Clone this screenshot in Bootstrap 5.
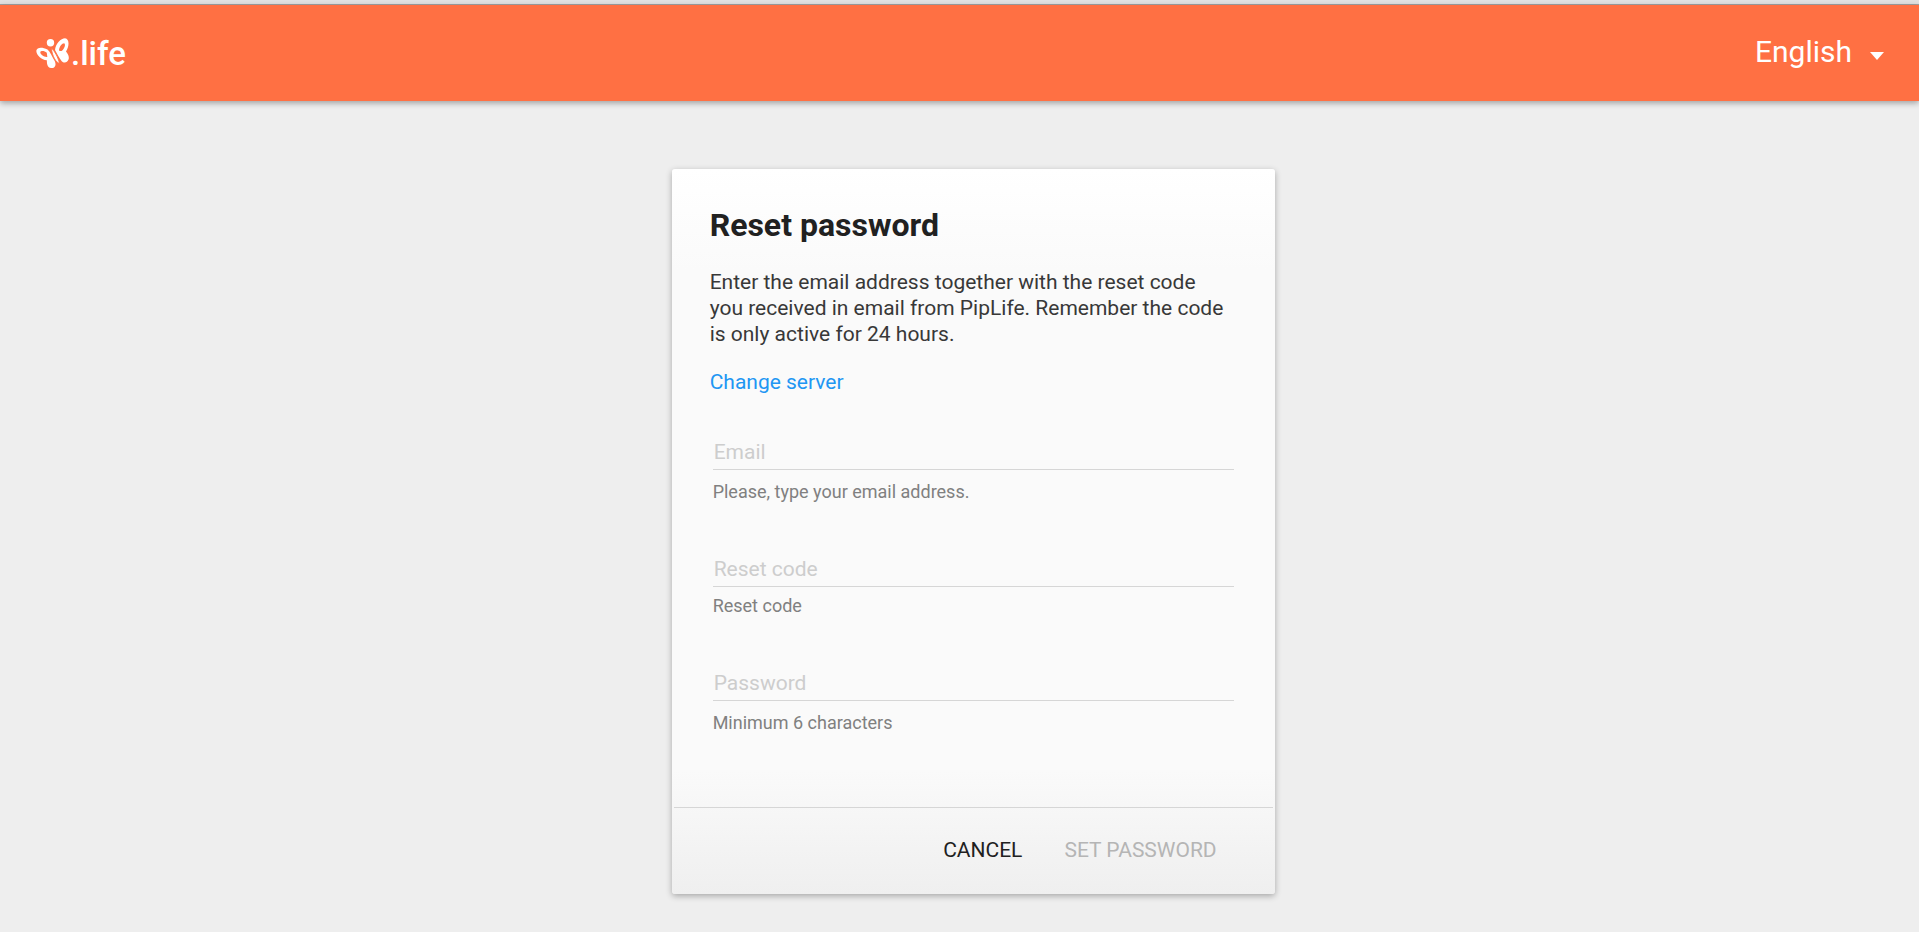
<!DOCTYPE html>
<html lang="en">
<head>
<meta charset="utf-8">
<meta name="viewport" content="width=device-width, initial-scale=1">
<title>Reset password</title>
<link rel="stylesheet" href="https://cdn.jsdelivr.net/npm/bootstrap@5.3.0/dist/css/bootstrap.min.css">
<style>
  body { font-family: Roboto, "Liberation Sans", sans-serif; background: #eee; color: #212121; font-size: 21px; line-height: 26px; }
  .top-strip { height: 5px; background: #e2e2e2; border-bottom: 1px solid #a3a3a3; }
  .app-bar { height: 96px; background: #ff7043; padding: 0 32px 0 36px; box-shadow: 0 2px 6px rgba(0,0,0,.34); }
  .brand { color: #fff; font-size: 33px; font-weight: 500; line-height: 40px; gap: 2px; }
  .brand svg { width: 33px; height: 31px; }
  .brand span { padding-top: 2px; }
  .lang { font-size: 30px; line-height: 36px; gap: 18px; padding: 0 0 2px; }
  .lang::after { margin: 7px 3px 0 0; border-top: 8px solid; border-left: 7px solid transparent; border-right: 7px solid transparent; }
  .stage { padding: 68px 16px 38px 35%; }
  .panel { max-width: 603px; border-radius: 3px; background: linear-gradient(#fff, #fafafa 14%, #fafafa 83%, #efefef); box-shadow: 0 2px 6px rgba(0,0,0,.3); }
  .panel-main { padding: 36px 38px 72px; }
  .panel h1 { font-size: 32px; line-height: 40px; margin-bottom: 24px; color: #212121; }
  .intro { margin-bottom: 22px; padding-right: 8px; color: #383838; }
  .server { color: #2196f3; }
  .fields { padding: 40px 3px 0; }
  .line-input { border: 0; border-bottom: 1px solid #d6d6d6; border-radius: 0; background: transparent; padding: 4px 1px; font-size: 21px; line-height: 26px; }
  .line-input::placeholder { color: #cdcdcd; opacity: 1; }
  .line-input:focus { background: transparent; box-shadow: none; border-color: #2196f3; }
  .hint { font-size: 18px; line-height: 24px; color: #808080; margin-top: 10px; }
  .hint-near { margin-top: 7px; }
  .field + .field { margin-top: 48px; }
  .panel-foot { border-top: 1px solid #d6d6d6; margin: 0 2px; padding: 21px 40px 23px; gap: 10px; }
  .flat { border: 0; font-size: 21px; line-height: 30px; padding: 6px 16px; color: #212121; }
  .flat:disabled { color: #b5b5b5; border: 0; opacity: 1; }
</style>
</head>
<body>
<div class="top-strip"></div>
<header class="app-bar d-flex align-items-center justify-content-between">
  <a href="#" class="brand d-flex align-items-center text-decoration-none" aria-label=".life home">
    <svg viewBox="0 0 33 31" fill="#fff" aria-hidden="true">
      <circle cx="14.5" cy="4.8" r="3.7"/>
      <path fill-rule="evenodd" d="M11.500 11.500C6 8.700 1 9 .3 12.700C.2 17 5.500 21.600 10.800 22.300C11 24.800 10.700 29.500 15.200 30.100C19.800 30.300 20.500 26 18.400 22.500C16 18.500 14.500 14 11.500 11.500ZM4.300 14.100C5 12.600 8.500 12.700 10.800 14.800L11.300 18.900C8 19.200 4 16.500 4.300 14.100Z"/>
      <path fill-rule="evenodd" d="M19 12C19.500 5.500 25 .3 29 .2C33.500 .8 33.500 8 30 13.600C32 15.800 33.500 19 32.500 21.500C31 25.500 26.800 25.200 25 22.200C23 19.500 21 15.500 19 12ZM23 12.200C23.500 8.500 26 5.200 28.200 5.300C29.800 6.500 28.700 9.800 26.500 12.200C25.500 13.300 23.700 13.500 23 12.200Z"/>
      <path d="M15.500 10.500C17.500 11 22.800 20.500 23.300 25.200C20.500 25.200 16 18 15.500 10.500Z" stroke="#ff7043" stroke-width=".8"/>
    </svg>
    <span>.life</span>
  </a>
  <div class="dropdown">
    <button type="button" class="lang btn border-0 text-white dropdown-toggle d-flex align-items-center" data-bs-toggle="dropdown" aria-expanded="false">English</button>
    <ul class="dropdown-menu dropdown-menu-end"><li><a class="dropdown-item" href="#">English</a></li></ul>
  </div>
</header>
<main class="stage">
  <form class="panel">
    <div class="panel-main">
      <h1 class="fw-bold">Reset password</h1>
      <p class="intro">Enter the email address together with the reset code you received in email from PipLife. Remember the code is only active for 24 hours.</p>
      <a href="#" class="server text-decoration-none">Change server</a>
      <div class="fields">
        <div class="field">
          <input type="email" class="line-input form-control" placeholder="Email" aria-label="Email" aria-describedby="email-hint">
          <div id="email-hint" class="hint">Please, type your email address.</div>
        </div>
        <div class="field">
          <input type="text" class="line-input form-control" placeholder="Reset code" aria-label="Reset code" aria-describedby="code-hint">
          <div id="code-hint" class="hint hint-near">Reset code</div>
        </div>
        <div class="field">
          <input type="password" class="line-input form-control" placeholder="Password" aria-label="Password" aria-describedby="password-hint">
          <div id="password-hint" class="hint">Minimum 6 characters</div>
        </div>
      </div>
    </div>
    <div class="panel-foot d-flex justify-content-end">
      <button type="button" class="flat btn text-uppercase">Cancel</button>
      <button type="submit" class="flat btn text-uppercase" disabled>Set password</button>
    </div>
  </form>
</main>
<script src="https://cdn.jsdelivr.net/npm/bootstrap@5.3.0/dist/js/bootstrap.bundle.min.js"></script>
</body>
</html>
